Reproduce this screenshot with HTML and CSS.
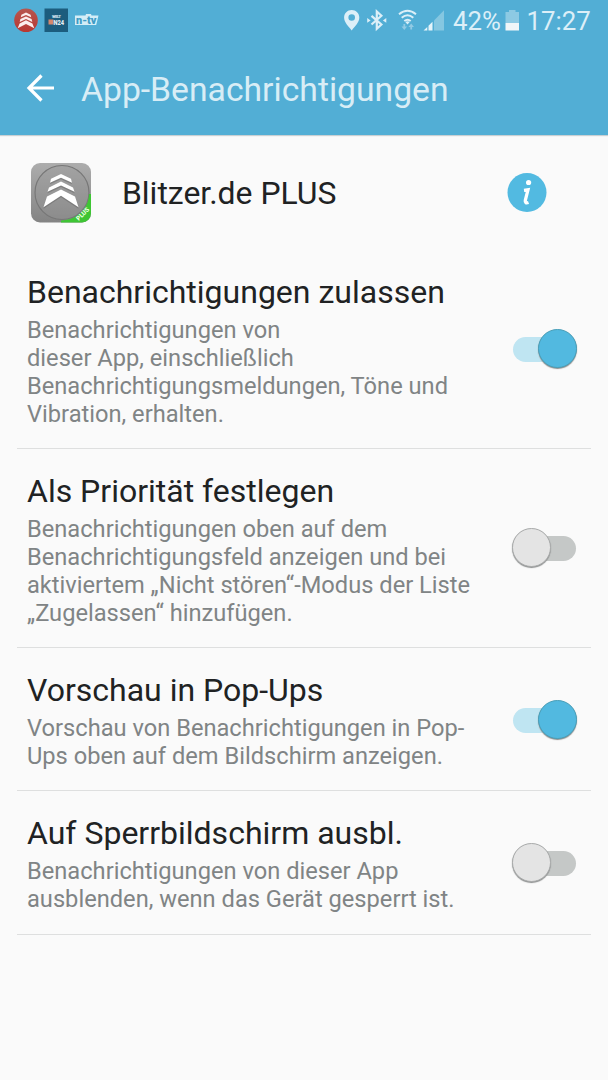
FILE: index.html
```html
<!DOCTYPE html>
<html lang="de">
<head>
<meta charset="utf-8">
<title>App-Benachrichtigungen</title>
<link rel="stylesheet" href="styles.css">
</head>
<body>
<header class="top">
  <div class="status">
    <svg class="status-left" width="110" height="42" viewBox="0 0 110 42">
      <defs><linearGradient id="red" x1="0" y1="0" x2="0" y2="1"><stop offset="0" stop-color="#b65750"/><stop offset="1" stop-color="#b93731"/></linearGradient></defs>
      <circle cx="26" cy="20.3" r="11.8" fill="url(#red)"/>
      <path d="M26 12.500l4.600 2.200.6 2.600-5.200-2.400-5.200 2.400.6-2.600zM26 16.400l5.600 2.700.7 2.900-6.300-3-6.300 3 .7-2.900zM26 20.200l6.400 3.300 1.900 4.700-8.300-4.300-8.300 4.300 1.900-4.700z" fill="#fbeeed"/>
      <rect x="44.500" y="8.500" width="23.500" height="23.500" fill="#1c5d7e"/>
      <text class="logo-text" x="52" y="17.500" font-size="4.300" textLength="9" fill="#cfe1ea">WELT</text>
      <rect x="48.500" y="19.500" width="5" height="5" fill="#d5876d"/>
      <text class="logo-text" x="53.500" y="24.700" font-size="6.800" textLength="10.500" lengthAdjust="spacingAndGlyphs" fill="#e6eef2">N24</text>
      <path d="M75 15.500h10.500l.5-1.500h5l.5 1.500h7l-2.300 9.500H75z" fill="#d3edf7"/>
      <text class="logo-text" x="76" y="24" font-size="11.500" textLength="20.500" lengthAdjust="spacingAndGlyphs" fill="#3e9bc5">n-tv</text>
    </svg>
    <svg class="status-icons" width="110" height="42" viewBox="338 0 110 42">
      <path fill-rule="evenodd" d="M351.700 10c-4.300 0-7.600 3.200-7.600 7.500 0 4.700 4.200 8.700 7.600 12.900 3.400-4.200 7.600-8.200 7.600-12.900 0-4.300-3.300-7.500-7.600-7.500zm0 4.200a3.300 3.300 0 1 1 0 6.600 3.300 3.300 0 0 1 0-6.600z" fill="#dceff8"/>
      <path d="M371.500 15.800l9.900 8.700-4.600 4.300V11.500l4.600 4.300-9.900 8.700" fill="none" stroke="#dceff8" stroke-width="2.200"/>
      <path d="M367.200 18l3.400 2.400-3.400 2.400zM386.300 18l-3.400 2.400 3.400 2.400z" fill="#dceff8"/>
      <g fill="none" stroke="#dceff8" stroke-width="2"><path d="M399 14.300q8.500-7 17 0M401.700 17.700q5.800-4.800 11.600 0M404.300 21q3.200-2.600 6.400 0"/></g>
      <path d="M405.300 22q2.200-1.500 4.400 0l-2.200 2.500z" fill="#dceff8"/>
      <path d="M404.300 24v4M411.200 29.500v-4" stroke="#91cae4" stroke-width="1.800"/>
      <path d="M401.500 26.500h5.600l-2.800 3.500zM408.400 27h5.600l-2.800-3.500z" fill="#91cae4"/>
      <path d="M423.500 30.500l3.800-3.600v3.600zM428.500 25.800l4-4v8.700h-4z" fill="#e5f4fa"/>
      <path d="M434 20.500l10-10.200v20.200h-10z" fill="#85c7e1"/>
    </svg>
    <span class="battery-label">42%</span>
    <svg class="battery" width="15" height="22" viewBox="0 0 15 22"><path d="M4 0h6.500v2H14v11H.5V2H4z" fill="#8dcae3"/><path d="M.5 13H14v7.500H.5z" fill="#f0f6f8"/></svg>
    <span class="clock">17:27</span>
  </div>
  <div class="toolbar">
    <svg class="back" width="30" height="30" viewBox="0 0 30 30"><path d="M28 15H3M15.500 2.500L3 15l12.500 12.500" fill="none" stroke="#fff" stroke-width="3.200"/></svg>
    <h1 class="heading">App-Benachrichtigungen</h1>
  </div>
</header>
<main>
  <section class="app">
    <svg class="app-icon" width="60" height="60" viewBox="0 0 60 60">
      <defs><linearGradient id="gray" x1="0" y1="0" x2="0" y2="1"><stop offset="0" stop-color="#adadad"/><stop offset="1" stop-color="#838383"/></linearGradient><clipPath id="round"><rect width="60" height="59.500" rx="9"/></clipPath></defs>
      <g clip-path="url(#round)">
        <rect width="60" height="60" fill="url(#gray)"/>
        <circle cx="31" cy="29.500" r="27" fill="#969696" fill-opacity=".4" stroke="#777" stroke-width="1.200"/>
        <path d="M60 31v29H30v-2.500C46 57 57.500 46 58 31z" fill="#3ec534"/>
        <g fill="#656565" opacity=".5" transform="translate(0 1.500)"><path d="M30 11l10 4.800 1 4L30 14.700l-11 5.100 1-4zM30 18.500l12 6 1.500 4.300L30 22.400l-13.500 6.400L18 24.500zM30 26.500L44 33.500l3.500 10.700L30 32.800 12.500 44.200 16 33.500z"/></g>
        <path d="M30 11l10 4.800 1 4L30 14.700l-11 5.100 1-4zM30 18.500l12 6 1.500 4.300L30 22.400l-13.500 6.400L18 24.500zM30 26.500L44 33.500l3.500 10.700L30 32.800 12.500 44.200 16 33.500z" fill="#fff"/>
        <text class="logo-text" transform="translate(47.800 58) rotate(-45)" font-size="6.500" textLength="15.500" lengthAdjust="spacingAndGlyphs" fill="#e5ffe0">PLUS</text>
      </g>
    </svg>
    <h2 class="app-name">Blitzer.de PLUS</h2>
    <svg class="info" width="40" height="40" viewBox="0 0 40 40"><circle cx="20" cy="19.500" r="19.500" fill="#52bae1"/><circle cx="21.600" cy="9.500" r="2.600" fill="#fff"/><path d="M17 17.300l4-.5-2.700 10.500q-.6 3.500 3.200 2.200" fill="none" stroke="#fff" stroke-width="3.300"/></svg>
  </section>
  <section class="row">
    <div class="copy"><h3 class="title">Benachrichtigungen zulassen</h3>
    <p class="desc">Benachrichtigungen von<br>dieser App, einschließlich<br>Benachrichtigungsmeldungen, Töne und<br>Vibration, erhalten.</p></div>
    <div class="switch on"><span class="knob"></span></div>
  </section>
  <section class="row">
    <div class="copy"><h3 class="title">Als Priorität festlegen</h3>
    <p class="desc">Benachrichtigungen oben auf dem<br>Benachrichtigungsfeld anzeigen und bei<br>aktiviertem „Nicht stören“-Modus der Liste<br>„Zugelassen“ hinzufügen.</p></div>
    <div class="switch"><span class="knob"></span></div>
  </section>
  <section class="row short">
    <div class="copy"><h3 class="title">Vorschau in Pop-Ups</h3>
    <p class="desc">Vorschau von Benachrichtigungen in Pop-<br>Ups oben auf dem Bildschirm anzeigen.</p></div>
    <div class="switch on"><span class="knob"></span></div>
  </section>
  <section class="row short last">
    <div class="copy"><h3 class="title">Auf Sperrbildschirm ausbl.</h3>
    <p class="desc">Benachrichtigungen von dieser App<br>ausblenden, wenn das Gerät gesperrt ist.</p></div>
    <div class="switch"><span class="knob"></span></div>
  </section>
</main>
</body>
</html>
```
FILE: styles.css
```css
* { box-sizing: border-box; }
body { margin: 0; width: 608px; height: 1080px; overflow: hidden; background: #fafafa; font-family: Roboto, "Noto Sans", sans-serif; color: #202223; }
h1, h2, h3, p { margin: 0; font-weight: 400; white-space: nowrap; }
svg { display: block; flex: none; }
.top { height: 135px; background: #52aed5; box-shadow: 0 1px 1px #c9d0d3; }
.status { height: 42px; display: flex; color: #dceff8; font-size: 25.800px; line-height: 43px; }
.status-icons { margin-left: 228px; }
.battery-label { width: 56.500px; padding-left: 5px; white-space: nowrap; }
.battery { margin: 10px 0 0 0; }
.clock { margin-left: 7px; }
.toolbar { height: 93px; display: flex; align-items: center; padding-left: 26px; }
.back { margin-top: -2px; }
.heading { margin-left: 25px; padding-top: 2px; font-size: 33.700px; color: #d8edf6; }
.app { height: 115px; padding: 28px 0 0 31px; display: flex; align-items: flex-start; }
.app-name { width: 385px; margin-left: 31px; font-size: 31.900px; line-height: 60px; }
.info { margin-top: 10px; }
.row { height: 199px; margin: 0 17px; padding: 23px 13px 0 10px; border-bottom: 1px solid #dedfdf; display: flex; justify-content: space-between; }
.row.short { height: 143px; }
.row.last { height: 144px; }
.title { font-size: 32px; line-height: 38px; }
.desc { margin-top: 5px; font-size: 23.670px; line-height: 28px; color: #808485; }
.switch { width: 66px; height: 40px; margin-top: 56px; display: flex; align-items: center; position: relative; }
.short .switch { margin-top: 29px; }
.switch::before { content: ""; width: 46px; height: 25px; border-radius: 13px; background: #c5c8c7; margin-left: 18px; }
.switch.on::before { background: #bfe5f2; margin-left: 1px; }
.knob { position: absolute; left: 0; top: 0; width: 39px; height: 39px; border-radius: 50%; background: #e4e4e4; border: 1px solid #a9abab; box-shadow: 0 1px 1px #8d8f8f; }
.on .knob { left: 26px; background: #52b9e0; border-color: #489fb9; }
.logo-text { font-family: Roboto, sans-serif; font-weight: 900; }
```
